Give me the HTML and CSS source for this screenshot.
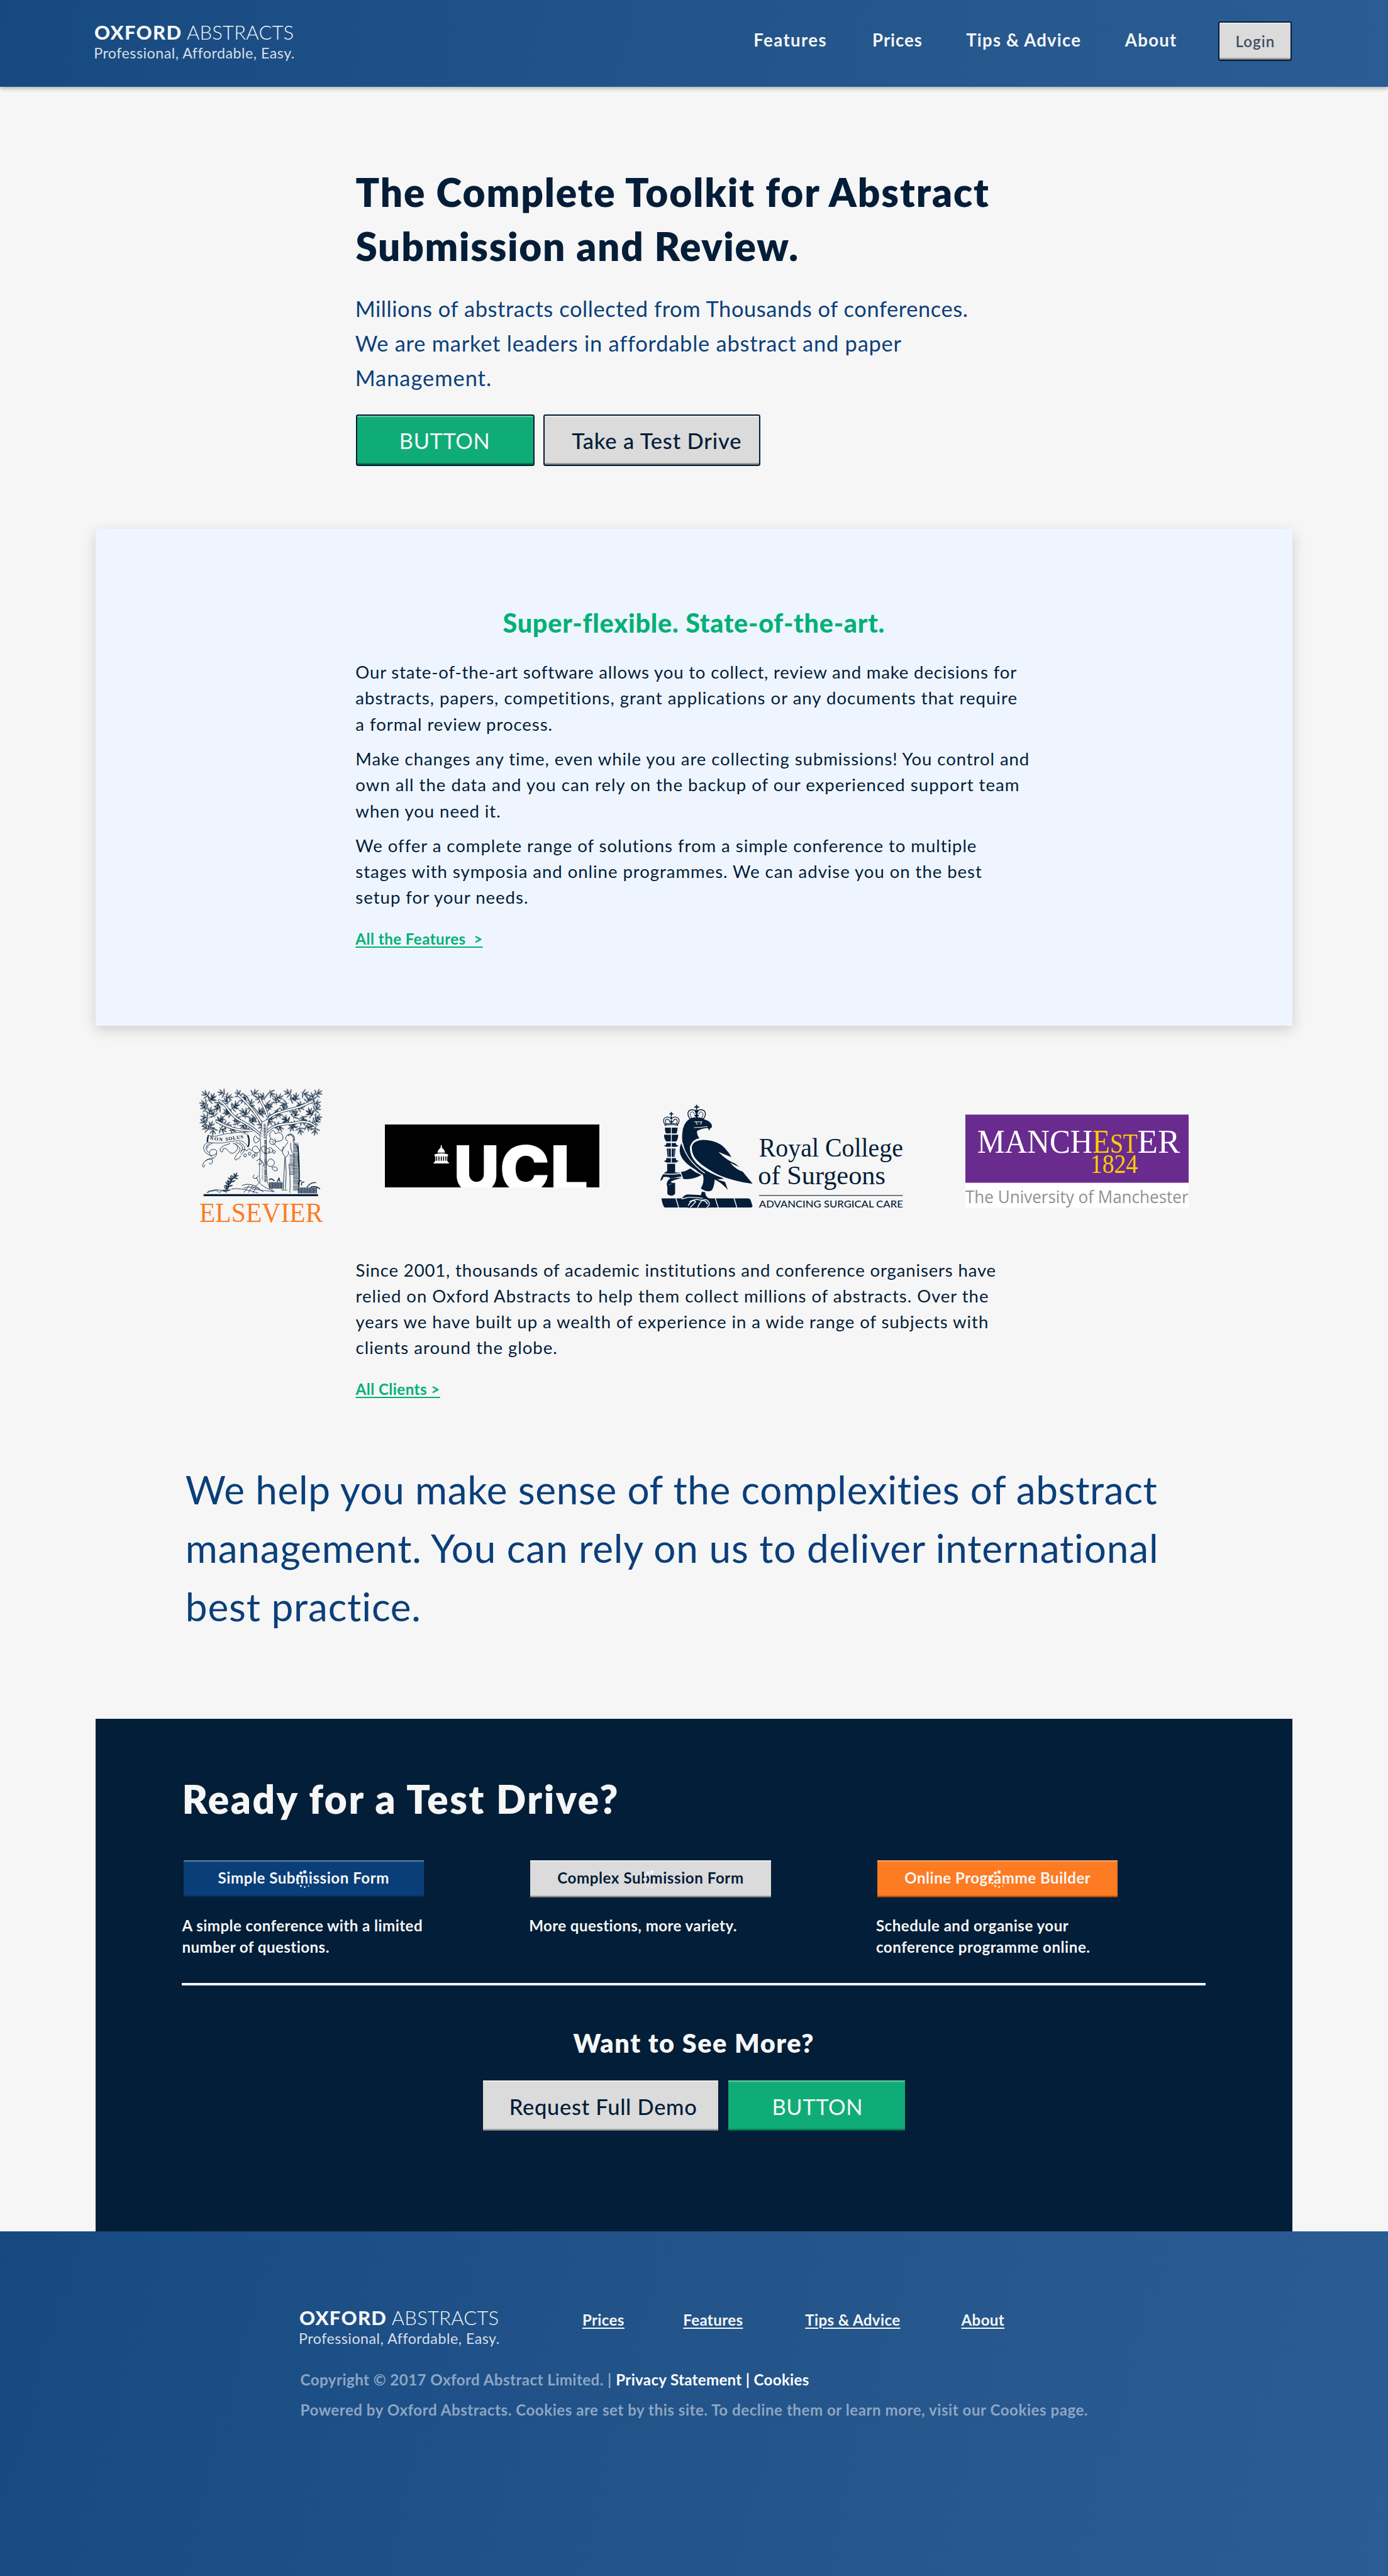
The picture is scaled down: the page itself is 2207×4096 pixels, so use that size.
FILE: index.html
```html
<!DOCTYPE html>
<html lang="en">
<head>
<meta charset="utf-8">
<title>Oxford Abstracts</title>
<link rel="stylesheet" href="styles.css">
</head>
<body>
<header class="header">
  <div class="logo">
    <div class="logo-name"><b>OXFORD</b> <span>ABSTRACTS</span></div>
    <div class="logo-tag">Professional, Affordable, Easy.</div>
  </div>
  <nav class="nav">
    <a class="nav-features">Features</a>
    <a class="nav-prices">Prices</a>
    <a class="nav-tips">Tips &amp; Advice</a>
    <a class="nav-about">About</a>
  </nav>
  <a class="btn btn-grey btn-outlined btn-login">Login</a>
</header>

<main>
  <section class="hero">
    <h1><span class="ls-31">The Complete Toolkit for Abstract</span><span class="ls-28">Submission and Review.</span></h1>
    <p class="lead"><span class="ls-16">Millions of abstracts collected from Thousands of conferences.</span><span class="ls-22">We are market leaders in affordable abstract and paper</span><span class="ls-28">Management.</span></p>
    <div class="hero-actions">
      <a class="btn btn-green btn-outlined btn-hero">BUTTON</a>
      <a class="btn btn-grey btn-outlined btn-drive">Take a Test Drive</a>
    </div>
  </section>

  <section class="panel">
    <h2>Super-flexible. State-of-the-art.</h2>
    <div class="copy">
      <p><span class="ls-30">Our state-of-the-art software allows you to collect, review and make decisions for</span><span class="ls-36">abstracts, papers, competitions, grant applications or any documents that require</span><span class="ls-34">a formal review process.</span></p>
      <p><span class="ls-33">Make changes any time, even while you are collecting submissions! You control and</span><span class="ls-36">own all the data and you can rely on the backup of our experienced support team</span><span class="ls-34">when you need it.</span></p>
      <p><span class="ls-34">We offer a complete range of solutions from a simple conference to multiple</span><span class="ls-34">stages with symposia and online programmes. We can advise you on the best</span><span class="ls-35">setup for your needs.</span></p>
      <a class="more">All the Features&nbsp; &gt;</a>
    </div>
  </section>

  <section class="clients">
    <div class="logos">
      <svg class="logo-elsevier" viewBox="30 30 720 840">
        <defs>
          <path id="leaf" d="M0 0Q-7 -12 0 -27Q7 -12 0 0ZM0 0V-20"/>
          <g id="sprig">
            <use href="#leaf" transform="translate(0 12) rotate(-78)"/><use href="#leaf" transform="translate(0 4) rotate(-42)"/><use href="#leaf" transform="rotate(-4)"/><use href="#leaf" transform="translate(0 4) rotate(36)"/><use href="#leaf" transform="translate(0 12) rotate(74)"/><path d="M0 0Q2 12 -3 24"/>
          </g>
          <g id="row-a">
            <use href="#sprig" transform="translate(14 10) rotate(-50)"/><use href="#sprig" transform="translate(52 28) rotate(25)"/><use href="#sprig" transform="translate(104 2) rotate(-75)"/><use href="#sprig" transform="translate(140 26) rotate(95)"/><use href="#sprig" transform="translate(196 8) rotate(-20)"/><use href="#sprig" transform="translate(232 30) rotate(-130)"/><use href="#sprig" transform="translate(284 4) rotate(55)"/><use href="#sprig" transform="translate(330 24) rotate(-35)"/><use href="#sprig" transform="translate(376 6) rotate(150)"/><use href="#sprig" transform="translate(420 28) rotate(70)"/><use href="#sprig" transform="translate(470 2) rotate(-60)"/><use href="#sprig" transform="translate(512 26) rotate(10)"/><use href="#sprig" transform="translate(562 8) rotate(110)"/><use href="#sprig" transform="translate(606 24) rotate(-15)"/><use href="#sprig" transform="translate(636 4) rotate(60)"/>
          </g>
          <g id="row-b">
            <use href="#sprig" transform="translate(4 22) rotate(-80)"/><use href="#sprig" transform="translate(44 0) rotate(65)"/><use href="#sprig" transform="translate(82 30) rotate(-160)"/><use href="#sprig" transform="translate(128 10) rotate(-30)"/><use href="#sprig" transform="translate(180 32) rotate(45)"/><use href="#sprig" transform="translate(222 4) rotate(-95)"/><use href="#sprig" transform="translate(262 22) rotate(20)"/><use href="#sprig" transform="translate(310 -4) rotate(-55)"/><use href="#sprig" transform="translate(362 30) rotate(125)"/><use href="#sprig" transform="translate(402 6) rotate(-10)"/><use href="#sprig" transform="translate(448 26) rotate(-110)"/><use href="#sprig" transform="translate(496 -2) rotate(80)"/><use href="#sprig" transform="translate(538 32) rotate(-45)"/><use href="#sprig" transform="translate(582 4) rotate(30)"/><use href="#sprig" transform="translate(626 22) rotate(75)"/>
          </g>
        </defs>
        <g fill="none" stroke="#041d38" stroke-width="1.900">
          <use href="#row-a" x="76" y="76"/>
          <use href="#row-b" x="76" y="114"/>
          <use href="#row-a" transform="translate(718 156) scale(-1 1)"/>
          <use href="#row-b" transform="translate(712 192) scale(-1 1)"/>
          <use href="#row-a" x="66" y="230"/>
          <g><use href="#sprig" transform="translate(92 272) rotate(-60)"/><use href="#sprig" transform="translate(130 288) rotate(190)"/><use href="#sprig" transform="translate(182 282) rotate(120)"/><use href="#sprig" transform="translate(240 284) rotate(80)"/><use href="#sprig" transform="translate(310 280) rotate(-40)"/><use href="#sprig" transform="translate(500 270) rotate(160)"/><use href="#sprig" transform="translate(566 268) rotate(205)"/><use href="#sprig" transform="translate(612 286) rotate(170)"/><use href="#sprig" transform="translate(656 268) rotate(130)"/><use href="#sprig" transform="translate(694 288) rotate(190)"/></g>
        </g>
        <g fill="none" stroke="#041d38" stroke-width="14" stroke-linecap="round">
          <path d="M405 320C350 270 320 250 270 225C220 200 215 150 165 120"/><path d="M400 250C370 200 340 150 270 90"/><path d="M425 240C440 190 520 180 610 155L680 125"/><path d="M430 290C480 240 540 255 590 242C640 230 670 240 695 262"/><path d="M345 285C290 290 220 275 150 235"/><path d="M430 205C425 170 400 140 390 110"/>
        </g>
        <g fill="none" stroke="#f6f6f6" stroke-width="9" stroke-linecap="round">
          <path d="M405 320C350 270 320 250 270 225C220 200 215 150 165 120"/><path d="M400 250C370 200 340 150 270 90"/><path d="M425 240C440 190 520 180 610 155L680 125"/><path d="M430 290C480 240 540 255 590 242C640 230 670 240 695 262"/><path d="M345 285C290 290 220 275 150 235"/><path d="M430 205C425 170 400 140 390 110"/>
        </g>
        <g stroke="#041d38" stroke-width="2.500" fill="#f6f6f6">
          <path d="M400 240C402 280 385 300 392 340C396 420 380 500 390 570Q375 590 345 610L470 625Q430 595 430 560C420 480 428 400 424 330C432 300 425 260 440 220Z"/>
          <path d="M416 250V330M420 340V570" stroke-width="12" stroke-dasharray="3 3"/>
          <path d="M400 270V320M404 480V560" stroke-width="8" stroke-dasharray="1.500 5"/>
          <path d="M104 312C150 330 180 300 230 302Q290 285 325 312Q335 345 322 378Q305 340 270 342C220 345 180 365 98 350Q92 330 104 312Z"/>
          <path d="M104 312L98 350" stroke-width="7"/>
          <path d="M322 312Q336 345 324 376" stroke-width="8"/>
        </g>
        <g fill="none" stroke="#041d38" stroke-width="3">
          <path d="M100 352Q60 375 90 410Q130 440 150 410Q155 385 120 392Q95 410 130 440M112 354Q75 380 105 408M128 356Q100 365 98 385M150 410Q150 445 100 445Q75 460 70 480Q80 500 85 475M88 455Q120 430 128 455Q120 485 108 465"/>
          <path d="M225 358Q160 375 170 400Q185 415 185 388Q200 378 215 400Q240 430 265 390Q270 370 250 358M240 355Q300 380 270 410Q240 440 255 450Q280 440 285 425M255 352Q315 370 280 410M275 350Q330 380 285 420"/>
          <path d="M355 330q10-30 20 0q20-5 5 18q-25 20-25-18M445 300q20-30 30 5q30-20 40 10q10 25-20 30q-30 5-35-10q-20 0-15-35M450 330q-20 30 15 35q20-15 5-35M350 380q20-20 30 5q20 20-10 25q-30-5-20-30M395 385q15-25 30 0q30 0 15 25q-30 15-45-25M440 380q20 0 20 20q-15 20-25 0M370 455q20-20 30 5q0 20-20 10M430 460q20-35 40 0q0 25-25 25q-20-5-15-25M455 490q30-10 32 15q-20 15-32-15M385 440q30 25 25 45M285 400q20-20 30 0q15-25 30 0M360 530q-15 10-5 20q20 5 25-15M370 545Q380 590 460 620"/>
          <path d="M300 420q10-10 15 0q0 15-12 12zM325 410q10-10 15 0q0 15-12 12zM345 425q10-10 15 0q0 15-12 12zM360 415q10-10 15 0q0 15-12 12zM460 400q10-10 15 0q0 15-12 12z"/>
          <path d="M455 345Q490 385 510 400L545 350M545 345Q520 335 540 312Q560 295 578 318Q588 345 572 350M520 375Q505 410 528 430L518 612M545 400Q555 420 530 435Q540 520 530 610M560 355Q555 400 580 420M550 470Q560 560 555 630M576 350Q610 380 600 440Q612 520 606 600M508 615H540"/>
        </g>
        <g fill="none" stroke="#041d38">
          <path d="M588 355V620" stroke-width="30" stroke-dasharray="2.500 3.500"/>
          <path d="M568 420V530" stroke-width="28" stroke-dasharray="2 4"/>
          <path d="M600 370Q610 480 605 600" stroke-width="6"/>
          <path d="M545 315q15-14 30 8v22" stroke-width="7" stroke-dasharray="3 2"/>
          <path d="M440 590H515" stroke-width="36" stroke-dasharray="4 2"/>
          <path d="M600 618H705" stroke-width="32" stroke-dasharray="4 2"/>
          <path d="M290 590Q340 570 390 610M300 605Q350 585 410 625M230 610Q280 600 380 632M330 590L300 630M350 590L325 630M370 600L350 632M100 630Q140 600 200 625" stroke-width="3"/>
          <path d="M440 560Q450 545 470 565M620 590Q615 570 635 570M650 600Q670 570 700 575M670 600Q700 590 722 610M485 570L495 550L500 568M600 585Q605 560 620 565" stroke-width="5"/>
          <path d="M205 620Q220 570 265 520" stroke-width="3"/>
          <g stroke-width="3"><use href="#sprig" transform="translate(215 585) scale(.9)"/><use href="#sprig" transform="translate(230 560) scale(.9)"/><use href="#sprig" transform="translate(252 540) rotate(30) scale(.8)"/><use href="#sprig" transform="translate(206 610) scale(.8)"/></g>
          <path d="M95 632q15-20 30-8q20-15 40 5q20-20 40 0" stroke-width="3"/>
          <path d="M78 644H711" stroke-width="11"/>
        </g>
        <text class="serif navy-fill" font-size="28" font-weight="700" transform="translate(111 336) rotate(8)" textLength="72">NON</text>
        <text class="serif navy-fill" font-size="28" font-weight="700" transform="translate(200 344) rotate(-9)" textLength="100">SOLUS</text>
        <text class="serif orange-fill" x="54" y="791" font-size="155" textLength="684" lengthAdjust="spacingAndGlyphs">ELSEVIER</text>
      </svg>

      <svg class="logo-ucl" viewBox="710 2074 396 116">
        <rect x="710" y="2074" width="396" height="116"/>
        <g fill="#fff">
          <path d="M813.300 2112h1.400l.8 5.500q5 3 5.300 8.500h-13.600q.3-5.500 5.300-8.500zM801.500 2129q12.500-4 25 0v3.500h-25zM803 2132.500h22v9h-22zM802 2141.500h24v2h-24zM800 2143.500h28v2.500h-28z"/>
          <text class="ucl" y="2199.500" font-size="120"><tspan x="837" textLength="84" lengthAdjust="spacingAndGlyphs">U</tspan><tspan x="922" textLength="92" lengthAdjust="spacingAndGlyphs">C</tspan><tspan x="1015" textLength="70" lengthAdjust="spacingAndGlyphs">L</tspan></text>
        </g>
        <path d="M805.500 2133v8M809.700 2133v8M814 2133v8M818.300 2133v8M822.500 2133v8" stroke="#000" stroke-width="1.900"/>
      </svg>

      <svg class="logo-rcs" viewBox="60 0 1395 780">
        <g fill="#041d38">
          <path d="M240 196Q262 188 285 189Q320 187 350 204Q375 222 368 240Q360 240 354 258Q352 240 340 242Q310 246 287 258Q286 285 301 298Q262 306 250 340Q240 385 280 432Q330 485 440 522L400 527Q440 540 442 540L458 585Q425 545 385 527Q382 575 365 590Q335 598 308 578Q330 540 320 502Q260 470 225 400Q200 330 206 270Q210 220 240 196Z"/>
          <path d="M258 350Q262 312 320 308Q400 310 440 352Q465 378 478 404L405 374Q450 420 500 440L520 458L470 434Q500 470 540 484L595 551Q500 540 400 500Q300 450 270 400Q258 375 258 350Z"/>
          <path d="M200 326Q180 370 205 410Q240 460 325 494Q245 430 220 380Q208 350 200 326Z"/>
          <path d="M250 466Q225 482 198 486L210 524Q265 530 312 502Q280 490 250 466Z"/>
          <path d="M110 240H180Q178 262 174 272H116Q109 262 110 240ZM105 279H183Q184 300 172 317H118Q103 300 105 279ZM118 325H170L172 335L186 340L172 346H118L104 340L116 335ZM120 356H168L164 402H124ZM118 409H170L172 420L186 424L172 433H118L104 425L116 420ZM122 440H166V490H122ZM123 560L166 545V605Q160 617 145 617Q128 617 123 605Z"/>
          <path d="M84 535Q92 495 120 482Q160 490 198 490L204 510Q150 520 135 524Q170 516 204 518Q160 530 140 540L166 552Q130 545 122 568Q112 540 140 520Q125 508 100 514Q102 526 84 535Z"/>
          <path d="M90 632H570Q580 632 585 645L594 672Q594 682 585 682H108Q98 676 90 632Z"/>
          <path d="M202 634Q215 612 235 610Q280 612 308 614L314 594L333 598Q332 615 345 626Q378 640 376 670L350 684H240Q225 655 245 640Z"/>
        </g>
        <g fill="none" stroke="#f6f6f6" stroke-width="5">
          <path d="M145 238V352M145 352V435"/><path d="M130 352V405M160 352V405" stroke-width="2"/>
          <path d="M207 325Q225 420 330 492M252 345Q250 405 330 460Q380 495 442 522"/>
          <path d="M170 630L186 684M388 630L405 684M492 630L508 684M202 634L240 626Q290 625 320 632M245 650Q280 632 300 640Q340 640 345 665M238 672Q262 630 280 650L250 682M290 684Q310 630 340 640Q370 660 340 684M308 580L336 596M100 496Q150 500 198 494M196 488L208 522"/>
          <path d="M270 240Q310 240 345 234M272 207Q290 210 316 207M284 208q-5 12 8 13M310 208q4 10-6 13" stroke-width="4"/>
        </g>
        <g fill="none" stroke="#041d38" stroke-width="5">
          <path d="M250 194Q232 170 239 153Q248 138 270 142Q282 148 282 162V190M320 194Q340 170 331 153Q322 138 300 142Q288 148 288 162V190"/><path d="M258 190Q242 160 256 154Q272 150 272 168M312 190Q328 160 314 154Q298 150 298 168" stroke-width="3"/>
          <path d="M248 193Q285 180 322 193" stroke-width="8"/><path d="M285 114V138M272 126H299M285 164V188M273 174H297" stroke-width="7"/><circle cx="285" cy="150" r="7" fill="#041d38"/>
        </g>
        <g fill="none" stroke="#041d38" stroke-width="4">
          <path d="M112 226Q96 205 105 190Q118 175 138 186M178 226Q194 205 185 190Q172 175 152 186M118 222Q108 202 116 195Q128 190 136 204M172 222Q182 202 174 195Q162 190 154 204"/><path d="M110 228Q145 218 180 228V221Q145 212 110 221Z"/>
          <path d="M145 153V178M134 164H156M145 197V220M135 208H155" stroke-width="6"/><circle cx="145" cy="187" r="5" fill="#041d38"/>
        </g>
        <text class="serif navy-fill" x="630" y="399" font-size="146" textLength="797" lengthAdjust="spacingAndGlyphs">Royal College</text>
        <text class="serif navy-fill" x="625" y="555" font-size="146" textLength="705" lengthAdjust="spacingAndGlyphs">of Surgeons</text>
        <path d="M631 615.500H1425" stroke="#5e6c7e" stroke-width="6"/>
        <text class="navy-fill rcs-small" x="630" y="682" font-size="50" textLength="797" lengthAdjust="spacingAndGlyphs">ADVANCING SURGICAL CARE</text>
      </svg>

      <svg class="logo-manchester" viewBox="120 -60 1236 780">
        <rect x="120" y="486" width="1236" height="138" fill="#fff"/>
        <rect x="120" y="108" width="1236" height="377" fill="#6a2b8f"/>
        <g class="serif" font-size="180">
          <text x="186" y="318" fill="#fff" textLength="638" lengthAdjust="spacingAndGlyphs">MANCH</text>
          <text x="824" y="318" fill="#ffcd00" textLength="96" lengthAdjust="spacingAndGlyphs">E</text>
          <text x="920" y="318" fill="#ffcd00" font-size="153" textLength="152" lengthAdjust="spacingAndGlyphs">ST</text>
          <text x="1072" y="318" fill="#fff" textLength="236" lengthAdjust="spacingAndGlyphs">ER</text>
          <text x="812" y="430" fill="#ffcd00" font-size="145" textLength="262" lengthAdjust="spacingAndGlyphs">1824</text>
        </g>
        <text class="man-small" x="120" y="598" font-size="98" fill="#8f9194" textLength="1234" lengthAdjust="spacingAndGlyphs">The University of Manchester</text>
      </svg>
    </div>

    <div class="copy">
      <p><span class="ls-30">Since 2001, thousands of academic institutions and conference organisers have</span><span class="ls-34">relied on Oxford Abstracts to help them collect millions of abstracts. Over the</span><span class="ls-33">years we have built up a wealth of experience in a wide range of subjects with</span><span class="ls-35">clients around the globe.</span></p>
      <a class="more">All Clients &gt;</a>
    </div>
  </section>

  <p class="statement"><span class="ls-11">We help you make sense of the complexities of abstract</span><span class="ls-13">management. You can rely on us to deliver international</span><span class="ls-13">best practice.</span></p>

  <section class="drive">
    <h2>Ready for a Test Drive?</h2>
    <div class="forms">
      <div class="form">
        <a class="btn btn-blue btn-form ls-21">Simple Submission Form<svg class="spinner" viewBox="-18 -18 36 36"><use href="#dots"/></svg></a>
        <p><span class="ls-18">A simple conference with a limited</span><span class="ls-18">number of questions.</span></p>
      </div>
      <div class="form">
        <a class="btn btn-grey btn-form ls-23">Complex Submission Form<svg class="spinner" viewBox="-18 -18 36 36"><use href="#dots"/></svg></a>
        <p><span class="ls-16">More questions, more variety.</span></p>
      </div>
      <div class="form">
        <a class="btn btn-orange btn-form ls-20">Online Programme Builder<svg class="spinner" viewBox="-18 -18 36 36"><g id="dots" fill="#f6f6f6"><circle cx="0" cy="-14" r="3"/><circle cx="-7" cy="-12" r="2.700"/><circle cx="-12" cy="-7" r="2.400"/><circle cx="-14" cy="0" r="2.200"/><circle cx="-12" cy="7" r="2"/><circle cx="-7" cy="12" r="1.800"/><circle cx="0" cy="14" r="1.600"/><circle cx="7" cy="12" r="1.300"/><circle cx="12" cy="7" r="1"/><circle cx="14" cy="0" r=".7"/></g></svg></a>
        <p><span class="ls-20">Schedule and organise your</span><span class="ls-21">conference programme online.</span></p>
      </div>
    </div>
    <hr>
    <h3>Want to See More?</h3>
    <div class="drive-actions">
      <a class="btn btn-grey btn-demo">Request Full Demo</a>
      <a class="btn btn-green btn-more">BUTTON</a>
    </div>
  </section>
</main>

<footer class="footer">
  <div class="footer-top">
    <div class="logo">
      <div class="logo-name"><b>OXFORD</b> <span>ABSTRACTS</span></div>
      <div class="logo-tag">Professional, Affordable, Easy.</div>
    </div>
    <nav class="footer-nav">
      <a class="f-prices">Prices</a>
      <a class="f-features">Features</a>
      <a class="f-tips">Tips &amp; Advice</a>
      <a class="f-about">About</a>
    </nav>
  </div>
  <p class="legal"><span class="legal-copy">Copyright © 2017 Oxford Abstract Limited. |</span><span class="legal-links">Privacy Statement | Cookies</span></p>
  <p class="legal legal-powered">Powered by Oxford Abstracts. Cookies are set by this site. To decline them or learn more, visit our Cookies page.</p>
</footer>
</body>
</html>
```
FILE: styles.css
```css
/* 1rem is ten design pixels */
html { font-size: 8.621px; }
* { box-sizing: border-box; }
body {
  margin: 0;
  background: #f6f6f6;
  color: #041d38;
  font-family: Lato, "Open Sans", sans-serif;
  height: 475.1rem;
  overflow: hidden;
}
h1, h2, h3, p { margin: 0; }
h1 > span, p > span { display: block; white-space: nowrap; }

.ls-11 { letter-spacing: .0106em; }
.ls-13 { letter-spacing: .0132em; }
.ls-16 { letter-spacing: .0163em; }
.ls-18 { letter-spacing: .018em; }
.ls-20 { letter-spacing: .02em; }
.ls-21 { letter-spacing: .0215em; }
.ls-22 { letter-spacing: .0218em; }
.ls-23 { letter-spacing: .023em; }
.ls-28 { letter-spacing: .0275em; }
.ls-30 { letter-spacing: .0296em; }
.ls-31 { letter-spacing: .0308em; }
.ls-33 { letter-spacing: .0328em; }
.ls-34 { letter-spacing: .034em; }
.ls-35 { letter-spacing: .0353em; }
.ls-36 { letter-spacing: .0359em; }

/* header */
.header {
  display: flex;
  align-items: flex-start;
  height: 16rem;
  padding-left: 17.4rem;
  background: linear-gradient(97deg, #164a7f 0%, #1d4f87 25%, #24558a 55%, #2b5d95 100%);
  box-shadow: 0 .4rem .8rem rgba(0, 0, 0, .32);
}
.logo { color: #f6f6f6; white-space: nowrap; }
.logo-name { font-size: 3.6rem; line-height: 4.05rem; font-weight: 300; letter-spacing: .007em; }
.logo-name b { font-weight: 900; letter-spacing: .041em; }
.logo-tag { font-size: 2.7rem; line-height: 3.6rem; letter-spacing: .021em; color: #d8dfe8; margin-left: -.1rem; }
.header .logo { margin-top: 3.95rem; width: 37rem; }
.nav {
  display: flex;
  margin: 5.5rem 0 0 84.6rem;
  font-size: 3.2rem;
  line-height: 4rem;
  font-weight: 700;
  color: #f6f6f6;
  white-space: nowrap;
}
.nav-features { width: 21.9rem; letter-spacing: .051em; }
.nav-prices { width: 17.3rem; letter-spacing: .034em; }
.nav-tips { width: 29.3rem; letter-spacing: .043em; }
.nav-about { width: 17.3rem; letter-spacing: .046em; }

/* buttons */
.btn {
  position: relative;
  display: block;
  white-space: nowrap;
  font-size: 4rem;
  line-height: 6rem;
  font-weight: 500;
}
.btn-outlined { border: .24rem solid #041d38; border-radius: .4rem; }
.btn-grey { background: #dbdbdb; color: #041d38; box-shadow: inset 0 .3rem .2rem -.1rem #eee, inset 0 -.35rem .2rem -.1rem #777; }
.btn-green { background: #10ac78; color: #f6f6f6; font-weight: 400; letter-spacing: .017em; box-shadow: inset 0 .3rem .2rem -.1rem #7fd3b5, inset 0 -.35rem .2rem -.1rem #06603f; }
.btn-blue { background: #093e79; color: #f6f6f6; box-shadow: inset 0 .3rem .2rem -.1rem #7595b8, inset 0 -.35rem .2rem -.1rem #05264c; }
.btn-orange { background: #fd7b22; color: #f6f6f6; box-shadow: inset 0 .3rem .2rem -.1rem #feb380, inset 0 -.35rem .2rem -.1rem #96430b; }
.btn-login {
  width: 13.6rem;
  height: 7.2rem;
  margin: 4rem 0 0 -.1rem;
  padding: 1.5rem 0 0 2.95rem;
  font-size: 2.8rem;
  line-height: 4rem;
  font-weight: 600;
  letter-spacing: .044em;
  color: #3d4f64;
}

/* hero */
.hero { padding: 14.4rem 0 0 65.6rem; }
.hero h1 { font-size: 7.2rem; line-height: 10rem; font-weight: 800; }
.lead { margin-top: 3.3rem; font-size: 4rem; line-height: 6.4rem; font-weight: 400; color: #0a3f7a; margin-left: -.1rem; }
.hero-actions { display: flex; gap: 1.6rem; margin-top: 3.5rem; }
.btn-hero { width: 33rem; height: 9.56rem; padding: 1.65rem 0 0 7.8rem; }
.btn-drive { width: 40rem; height: 9.56rem; padding: 1.65rem 0 0 5.04rem; letter-spacing: .025em; }

/* feature panel */
.panel {
  width: 220.8rem;
  height: 91.65rem;
  margin: 11.64rem 0 0 17.58rem;
  padding-top: 14.4rem;
  background: #eef5ff;
  box-shadow: 0 .8rem 2.4rem rgba(0, 0, 0, .17);
}
.panel h2 { font-size: 4.8rem; line-height: 6rem; font-weight: 900; letter-spacing: .0184em; color: #00b077; text-align: center; }
.panel .copy { margin: 3.6rem 0 0 48rem; }
.copy p { font-size: 3.2rem; line-height: 4.785rem; font-weight: 400; }
.copy p + p { margin-top: 1.63rem; }
.more {
  display: inline-block;
  margin-top: 3.25rem;
  font-size: 2.8rem;
  line-height: 4rem;
  font-weight: 700;
  letter-spacing: .0185em;
  color: #00b077;
  text-decoration: underline;
  text-decoration-thickness: .2rem;
  text-underline-offset: .4rem;
  text-decoration-skip-ink: none;
}

/* clients */
.logos { display: flex; align-items: flex-start; height: 26rem; margin: 10.75rem 0 0 36rem; }
.logo-elsevier { width: 24rem; height: 28rem; }
.logo-ucl { width: 39.6rem; height: 11.6rem; margin: 7.4rem 0 0 11rem; }
.logo-rcs { width: 46.5rem; height: 26rem; margin-left: 10.4rem; }
.logo-manchester { width: 41.2rem; height: 26rem; margin-left: 10.5rem; }
.serif { font-family: "Liberation Serif", serif; }
.navy-fill { fill: #041d38; }
.orange-fill { fill: #fd7b22; }
.ucl { font-family: Inter, sans-serif; font-weight: 900; }
.rcs-small { font-weight: 500; }
.man-small { font-family: "Open Sans", sans-serif; }
.clients .copy { margin: 5.85rem 0 0 65.6rem; }

.statement {
  margin: 11.1rem 0 0 34.2rem;
  font-size: 7.2rem;
  line-height: 10.81rem;
  font-weight: 400;
  color: #0a3f7a;
}

/* test drive */
.drive {
  width: 220.8rem;
  height: 94.6rem;
  margin: 15.25rem 0 0 17.58rem;
  padding: 9.75rem 16rem 0;
  background: #021e38;
  color: #f6f6f6;
}
.drive h2 { font-size: 7.2rem; line-height: 10rem; font-weight: 800; letter-spacing: .042em; }
.forms { display: flex; margin-top: 6.4rem; height: 17.92rem; }
.form { flex: 0 0 64rem; }
.form p { margin-top: 3.2rem; font-size: 2.8rem; line-height: 4rem; font-weight: 700; }
.btn-form {
  width: 44.35rem;
  height: 6.8rem;
  margin-left: .25rem;
  padding-top: 1.2rem;
  text-align: center;
  font-size: 2.8rem;
  line-height: 4rem;
  font-weight: 700;
}
.spinner { position: absolute; width: 3.6rem; height: 3.6rem; left: 20.6rem; top: 1.65rem; }
.drive hr { width: 188.8rem; height: .45rem; margin: 4.7rem 0 0; border: 0; background: #f6f6f6; }
.drive h3 { margin-top: 7.65rem; font-size: 4.8rem; line-height: 6rem; font-weight: 800; letter-spacing: .038em; text-align: center; }
.drive-actions { display: flex; gap: 1.95rem; margin: 3.9rem 0 0 55.45rem; }
.btn-demo { width: 43.4rem; height: 9.2rem; padding: 1.8rem 0 0 4.9rem; letter-spacing: .0205em; }
.btn-more { width: 32.6rem; height: 9.2rem; padding: 1.8rem 0 0 8rem; }

/* footer */
.footer {
  height: 63.6rem;
  padding: 13.86rem 0 0 55.2rem;
  background: linear-gradient(105deg, #164a7f 0%, #1d4f87 25%, #24558a 55%, #2b5d95 100%);
  color: #f6f6f6;
}
.footer-top { display: flex; height: 7.65rem; }
.footer .logo { width: 52.2rem; }
.footer-nav {
  display: flex;
  margin-top: .5rem;
  font-size: 2.8rem;
  line-height: 4rem;
  font-weight: 700;
  letter-spacing: .015em;
  white-space: nowrap;
}
.f-prices { width: 18.6rem; }
.f-features { width: 22.5rem; }
.f-tips { width: 28.8rem; }
.footer-nav a { text-decoration: underline; text-decoration-thickness: .25rem; text-underline-offset: .4rem; }
.legal { display: flex; margin-top: 3.85rem; padding-left: .2rem; font-size: 2.8rem; line-height: 4rem; font-weight: 700; white-space: nowrap; }
.legal-copy { width: 58.2rem; letter-spacing: .018em; color: #8ea6c3; }
.legal-links { letter-spacing: .0125em; color: #fff; }
.legal-powered { margin-top: 1.6rem; letter-spacing: .0214em; color: #8ea6c3; }
```
